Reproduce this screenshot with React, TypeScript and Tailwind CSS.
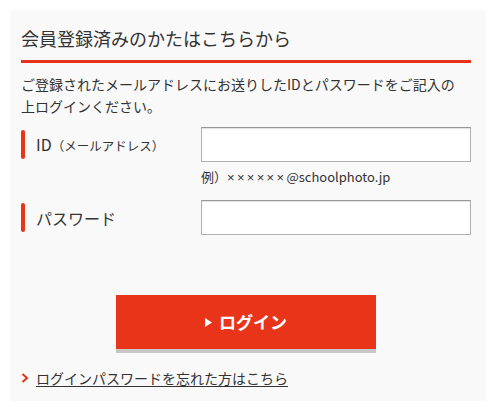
function Field({ label, note, hasSub }: { label: string; note?: string; hasSub?: boolean }) {
    return (
        <div className="flex items-center">
            <div className="flex items-center w-[180px] shrink-0">
                <span className="w-[4px] h-[29px] rounded-[2px] bg-[#e8351a]" />
                <span className="ml-[11px] text-[16px] leading-[20px] text-[#333]">
                    {label}
                    {hasSub && <span className="text-[12.5px]">（メールアドレス）</span>}
                </span>
            </div>
            <input
                type={note ? 'password' : 'text'}
                className="w-[270px] h-[35px] bg-white border border-[#b0b0b0] border-t-[#999] shadow-[inset_0_1px_1px_rgba(0,0,0,0.12)] outline-none"
            />
        </div>
    )
}

export default function App() {
    return (
        <div className="bg-white min-h-[410px] pt-[10px] pl-[10px] font-['Noto_Sans_CJK_JP',sans-serif]">
            <div className="w-[476px] bg-[#f9f9f9] pt-[15px] pl-[11px] pr-[15px] pb-[13px]">
                <h2 className="text-[18px] leading-[26px] text-[#333] pb-[9px] border-b-[3px] border-[#e8301a]">
                    会員登録済みのかたはこちらから
                </h2>
                <p className="mt-[10px] text-[14px] leading-[22px] text-[#333]">
                    ご登録されたメールアドレスにお送りしたIDとパスワードをご記入の
                    <br />
                    上ログインください。
                </p>

                <div className="mt-[10px]">
                    <Field label="ID" hasSub />
                </div>
                <p className="mt-[6px] ml-[180px] text-[13px] leading-[18px] text-[#333]">
                    例）
                    <span className="font-['Liberation_Sans',sans-serif] tracking-[2.3px]">××××××</span>
                    @schoolphoto.jp
                </p>
                <div className="mt-[13px]">
                    <Field label="パスワード" note="pw" />
                </div>

                <div className="mt-[60px] flex justify-center">
                    <button className="w-[260px] h-[58px] bg-[#e8351a] border-b-[4px] border-[#c6c6c6] flex items-center justify-center text-white">
                        <svg width="7" height="9" viewBox="0 0 7 9" className="mr-[7px]">
                            <polygon points="0,0 7,4.5 0,9" fill="#fff" />
                        </svg>
                        <span className="text-[17px] font-bold leading-[24px]">ログイン</span>
                    </button>
                </div>

                <div className="mt-[15px] flex items-center">
                    <svg width="8" height="10" viewBox="0 0 8 10" className="mr-[7px]">
                        <polyline points="1.5,1 6,5 1.5,9" fill="none" stroke="#e8301a" strokeWidth="2" />
                    </svg>
                    <a href="#" className="text-[14px] leading-[20px] text-[#333] underline underline-offset-[2px]">
                        ログインパスワードを忘れた方はこちら
                    </a>
                </div>
            </div>
        </div>
    )
}
